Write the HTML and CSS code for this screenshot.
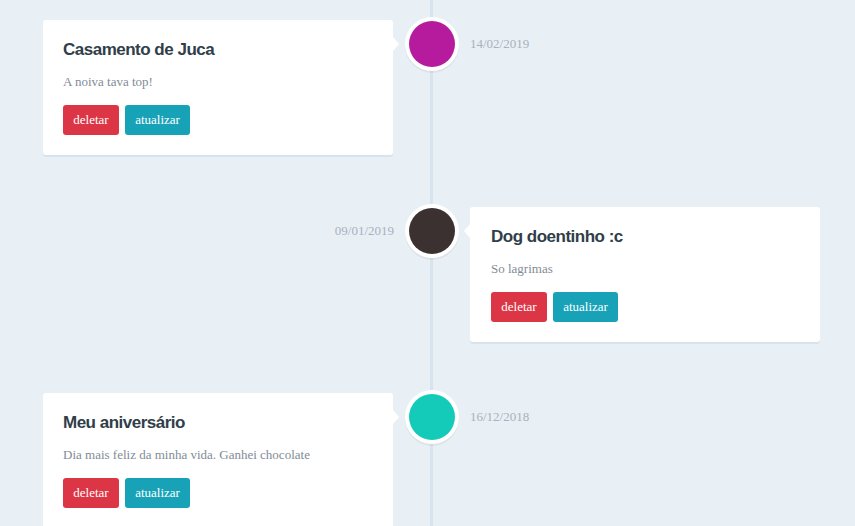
FILE: index.html
```html
<!DOCTYPE html>
<html lang="pt">
<head>
<meta charset="utf-8">
<title>Timeline</title>
<link rel="stylesheet" href="styles.css">
</head>
<body>
<main class="timeline">
  <section class="entry entry-left">
    <article class="card">
      <h2 class="card-title">Casamento de Juca</h2>
      <p class="card-text">A noiva tava top!</p>
      <div class="actions">
        <button class="btn btn-danger">deletar</button>
        <button class="btn btn-info">atualizar</button>
      </div>
    </article>
    <div class="dot dot-magenta"></div>
    <span class="date">14/02/2019</span>
  </section>

  <section class="entry entry-right">
    <article class="card">
      <h2 class="card-title">Dog doentinho :c</h2>
      <p class="card-text">So lagrimas</p>
      <div class="actions">
        <button class="btn btn-danger">deletar</button>
        <button class="btn btn-info">atualizar</button>
      </div>
    </article>
    <div class="dot dot-brown"></div>
    <span class="date">09/01/2019</span>
  </section>

  <section class="entry entry-left">
    <article class="card">
      <h2 class="card-title">Meu aniversário</h2>
      <p class="card-text">Dia mais feliz da minha vida. Ganhei chocolate</p>
      <div class="actions">
        <button class="btn btn-danger">deletar</button>
        <button class="btn btn-info">atualizar</button>
      </div>
    </article>
    <div class="dot dot-teal"></div>
    <span class="date">16/12/2018</span>
  </section>
</main>
</body>
</html>
```

FILE: styles.css
```css
html, body {
  margin: 0;
  padding: 0;
  height: 100%;
  overflow: hidden;
}

body {
  background: #e9f0f5;
  font-family: "Liberation Serif", "Times New Roman", serif;
}

.timeline {
  width: 777px;
  margin-left: 43px;
  padding-top: 20px;
  min-height: 100%;
  display: flex;
  flex-direction: column;
  gap: 51.5px;
  background-image: linear-gradient(to right,
    transparent 387px, #d7e4ed 387px, #d7e4ed 390px, transparent 390px);
}

.entry {
  display: grid;
  grid-template-columns: 350px 77px 350px;
  align-items: start;
}

.entry-left {
  grid-template-areas: "card dot date";
}

.entry-right {
  grid-template-areas: "date dot card";
}

.card {
  grid-area: card;
  position: relative;
  background: #fff;
  border-radius: 3px;
  box-shadow: 0 2px 0 #d7e4ed;
  padding: 19px 20px 20px;
}

.entry-right .card {
  padding-left: 21px;
}

.card::before {
  content: "";
  position: absolute;
  top: 17px;
  width: 0;
  height: 0;
  border-top: 7px solid transparent;
  border-bottom: 7px solid transparent;
}

.entry-left .card::before {
  left: 100%;
  border-left: 6px solid #fff;
}

.entry-right .card::before {
  right: 100%;
  border-right: 6px solid #fff;
}

.card-title {
  margin: 0 0 14px;
  font-family: "Liberation Sans", Arial, sans-serif;
  font-size: 17px;
  font-weight: bold;
  letter-spacing: -0.5px;
  line-height: 21px;
  color: #303e49;
}

.card-text {
  margin: 0 0 16px;
  font-size: 13px;
  line-height: 15px;
  color: #7f8c97;
}

.actions {
  display: flex;
  gap: 6px;
}

.btn {
  height: 30px;
  padding: 0 10px;
  border: 0;
  border-radius: 3px;
  font-family: "Liberation Serif", "Times New Roman", serif;
  font-size: 13px;
  color: #fff;
  cursor: pointer;
}

.btn-danger {
  background: #dc3545;
  width: 56px;
}

.btn-info {
  background: #17a2b8;
  width: 65px;
}

.dot {
  grid-area: dot;
  justify-self: center;
  width: 46px;
  height: 46px;
  margin-top: 1px;
  border-radius: 50%;
  box-shadow: 0 0 0 4px #fff, 0 2px 0 4px rgba(0, 0, 0, 0.05);
}

.dot-magenta { background: #b61b9e; }
.dot-brown { background: #3b3131; }
.dot-teal { background: #13cbb8; }

.date {
  grid-area: date;
  font-size: 13px;
  line-height: 46px;
  margin-top: 1px;
  color: #a8b1bc;
}

.entry-right .date {
  text-align: right;
  margin-right: -1px;
}
```
